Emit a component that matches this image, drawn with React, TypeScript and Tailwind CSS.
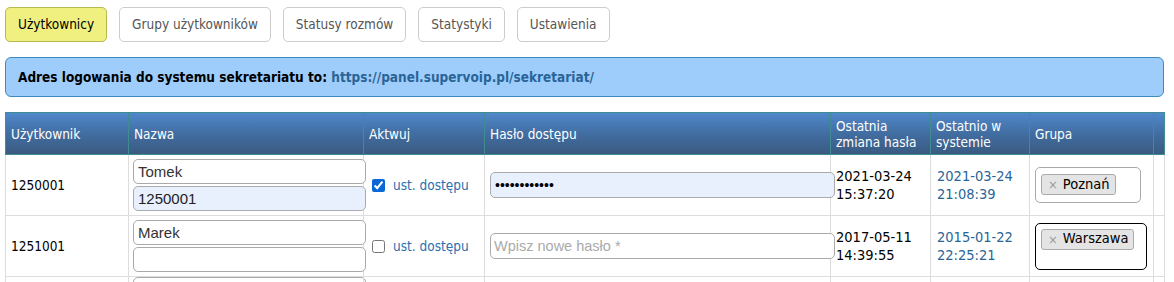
import React from 'react';

const tabs = ['Użytkownicy', 'Grupy użytkowników', 'Statusy rozmów', 'Statystyki', 'Ustawienia'];

const users = [
  {
    id: '1250001',
    name: 'Tomek',
    login: '1250001',
    active: true,
    password: '••••••••••••',
    changed: ['2021-03-24', '15:37:20'],
    seen: ['2021-03-24', '21:08:39'],
    group: 'Poznań',
    focused: false,
  },
  {
    id: '1251001',
    name: 'Marek',
    login: '',
    active: false,
    password: '',
    changed: ['2017-05-11', '14:39:55'],
    seen: ['2015-01-22', '22:25:21'],
    group: 'Warszawa',
    focused: true,
  },
];

const Tag = ({ label }: { label: string }) => (
  <span className="inline-flex items-center h-[21px] pl-[6px] pr-[5px] gap-[5px] rounded-[3px] border border-[#aaaaaa] bg-[#e4e4e4] text-[14.5px] text-black">
    <span className="text-[#999] text-[13px]">×</span>
    {label}
  </span>
);

export default function App() {
  return (
    <div className="w-[1174px] h-[282px] overflow-hidden bg-white px-[5px] pt-[7px] font-['DejaVu_Sans_Condensed',sans-serif] text-[13.5px] text-black">
      <div className="flex gap-[12px]">
        {tabs.map((t, i) => (
          <button
            key={t}
            className={
              i === 0
                ? 'h-[35px] px-[12px] rounded-[5px] border border-[#b8b850] bg-[#f0f080] text-black'
                : 'h-[35px] px-[12px] rounded-[5px] border border-[#cccccc] bg-white text-[#555]'
            }
          >
            {t}
          </button>
        ))}
      </div>

      <div className="mt-[15px] h-[40px] w-[1159px] flex items-center px-[12px] rounded-[6px] border border-[#3d8ac0] bg-[#9ecdfb] font-bold">
        Adres logowania do systemu sekretariatu to:&nbsp;
        <span className="text-[#2a6496]">https://panel.supervoip.pl/sekretariat/</span>
      </div>

      <table className="mt-[15px] w-[1159px] table-fixed border-collapse">
        <colgroup>
          <col className="w-[123px]" />
          <col className="w-[235px]" />
          <col className="w-[121px]" />
          <col className="w-[346px]" />
          <col className="w-[100px]" />
          <col className="w-[99px]" />
          <col className="w-[124px]" />
          <col className="w-[11px]" />
        </colgroup>
        <thead>
          <tr className="h-[42px] bg-gradient-to-b from-[#4f88cb] via-[#416da0] to-[#3a5a80] text-white text-left leading-[16px]">
            {['Użytkownik', 'Nazwa', 'Aktwuj', 'Hasło dostępu'].map((h) => (
              <th key={h} className="font-normal px-[5px] border border-[#3f8c93]">{h}</th>
            ))}
            <th className="font-normal px-[5px] border border-[#3f8c93]">Ostatnia<br />zmiana hasła</th>
            <th className="font-normal px-[5px] border border-[#3f8c93]">Ostatnio w<br />systemie</th>
            <th className="font-normal px-[5px] border border-[#3f8c93]">Grupa</th>
            <th className="border border-[#3f8c93]"></th>
          </tr>
        </thead>
        <tbody>
          {users.map((u) => (
            <tr key={u.id} className="h-[61px]">
              <td className="px-[5px] border border-[#dddddd]">{u.id}</td>
              <td className="px-[4px] border border-[#dddddd]">
                <div className="w-[233px] flex flex-col gap-[2px] font-['Liberation_Sans',sans-serif] text-[15px]">
                  <input
                    readOnly
                    value={u.name}
                    className="h-[25px] w-[233px] px-[4px] rounded-[5px] border border-[#aaaaaa] bg-white text-[#333] outline-none"
                  />
                  <input
                    readOnly
                    value={u.login}
                    className={
                      u.login
                        ? 'h-[25px] w-[233px] px-[4px] rounded-[5px] border border-[#aaaaaa] bg-[#e8f0fe] text-[#222] outline-none'
                        : 'h-[25px] w-[233px] px-[4px] rounded-[5px] border border-[#aaaaaa] bg-white outline-none'
                    }
                  />
                </div>
              </td>
              <td className="px-[8px] border border-[#dddddd]">
                <label className="flex items-center gap-[8px] text-[#2a6fb0]">
                  <input type="checkbox" readOnly checked={u.active} className="w-[13px] h-[13px] accent-[#0b67d4]" />
                  ust. dostępu
                </label>
              </td>
              <td className="px-[5px] border border-[#dddddd]">
                <input
                  readOnly
                  value={u.password}
                  placeholder="Wpisz nowe hasło *"
                  className={
                    u.password
                      ? "h-[26px] w-[345px] px-[4px] rounded-[5px] border border-[#aaaaaa] bg-[#e8f0fe] text-black text-[14px] outline-none font-['Liberation_Sans',sans-serif]"
                      : "h-[26px] w-[345px] px-[3px] rounded-[5px] border border-[#aaaaaa] bg-white text-[14.5px] placeholder:text-[#aaa] outline-none font-['Liberation_Sans',sans-serif]"
                  }
                />
              </td>
              <td className="pl-[5px] pr-0 border border-[#dddddd] leading-[18px] text-[14.5px]">
                {u.changed[0]}
                <br />
                {u.changed[1]}
              </td>
              <td className="px-[6px] border border-[#dddddd] leading-[18px] text-[14.5px] text-[#2a6496]">
                {u.seen[0]}
                <br />
                {u.seen[1]}
              </td>
              <td className="px-[5px] border border-[#dddddd]">
                <div
                  className={
                    u.focused
                      ? 'h-[47px] w-[112px] rounded-[5px] border border-black pl-[5px] pt-[5px]'
                      : 'h-[36px] w-[106px] rounded-[5px] border border-[#aaaaaa] pl-[5px] pt-[6px]'
                  }
                >
                  <Tag label={u.group} />
                </div>
              </td>
              <td className="border border-[#dddddd]"></td>
            </tr>
          ))}
          <tr className="h-[20px]">
            <td className="border border-[#dddddd]"></td>
            <td className="px-[4px] border border-[#dddddd] align-top">
              <div className="h-[25px] w-[233px] rounded-[5px] border border-[#aaaaaa] bg-white"></div>
            </td>
            <td className="border border-[#dddddd]"></td>
            <td className="border border-[#dddddd]"></td>
            <td className="border border-[#dddddd]"></td>
            <td className="border border-[#dddddd]"></td>
            <td className="border border-[#dddddd]"></td>
            <td className="border border-[#dddddd]"></td>
          </tr>
        </tbody>
      </table>
    </div>
  );
}
